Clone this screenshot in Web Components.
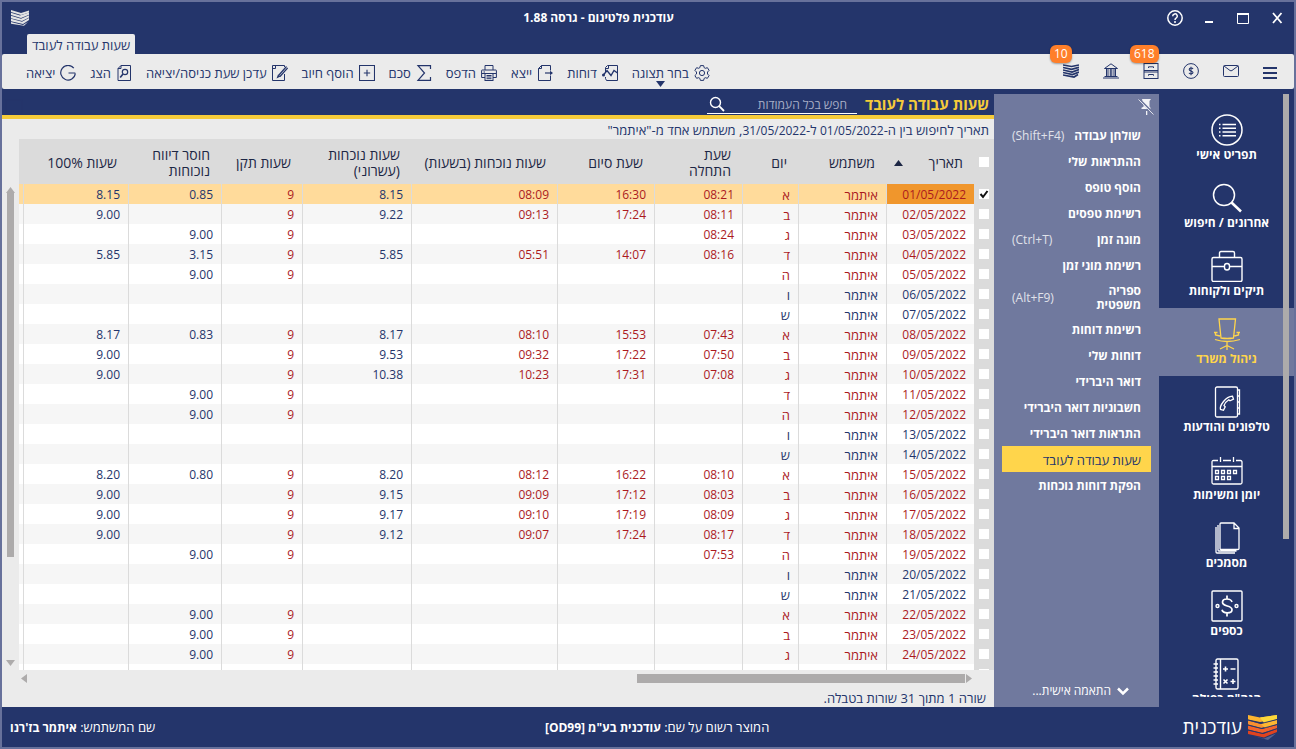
<!DOCTYPE html>
<html lang="he" dir="rtl">
<head>
<meta charset="utf-8">
<title>עודכנית פלטינום</title>
<style>
  html, body { margin: 0; height: 100%; }
  body {
    font: 12px/16px "Open Sans", "Noto Sans", "Liberation Sans", sans-serif;
    --navy: #24356b; --slate: #70799e; --light: #ebebeb; --head: #dbdbdb;
    --gold: #f5cb3a; --sel: #ffd54b; --bar: #adabab; --red: #ab1a1e;
    color: var(--navy);
  }
</style>
</head>
<body>
<od-app></od-app>
<script>
const ICONS = {
  logo: [20, 16, '<g fill="#e4e4e4"><path d="M1 0l10 3 8-2.600v2L11 5 1 2z"/><path d="M1 2.700l9 2.800 9-3v2.200L11 8 1 5z"/><path d="M1 5.700l10 3 8-3.500v2.200L12 11 1 8.200z"/><path d="M1 8.800l11 3 7-3.700v2L13 14 1 11.200z"/><path d="M1 12l12 3 5-3-4 3.700L1 13.800z"/></g>'],
  help: [16, 16, '<g fill="none" stroke="currentColor" stroke-width="1.500"><circle cx="8" cy="8" r="7.200"/><path d="M5.700 6.200a2.300 2.300 0 1 1 3.400 2c-.8.500-1.100.8-1.100 1.700"/></g><circle cx="8" cy="12" r="1" fill="currentColor"/>'],
  min: [16, 16, '<path d="M4 11h8v2H4z" fill="currentColor"/>'],
  max: [16, 16, '<path d="M2.500 3.500h11v10h-11z" fill="none" stroke="currentColor"/><path d="M2 3h12v2H2z" fill="currentColor"/>'],
  close: [16, 16, '<path d="M4 3l8.500 10M12.500 3L4 13" stroke="currentColor" stroke-width="1.800"/>'],
  menu: [16, 16, '<path d="M0 4h14v2H0zM0 9h14v2H0zM0 14h14v2H0z" fill="currentColor"/>'],
  mail: [16, 16, '<g fill="none" stroke="currentColor"><rect x=".5" y="2.500" width="15" height="11" rx="1"/><path d="M1 3l6 4.500q1 .7 2 0L15 3"/></g>'],
  coin: [16, 16, '<g fill="none" stroke="currentColor"><circle cx="8" cy="8" r="7.400"/><path d="M10 6c-.5-1.300-3.800-1.300-3.800.4C6.200 8.300 10 7.500 10 9.600c0 1.700-3.500 1.700-4 .2M8 3.700v8.600" stroke-width="1.100"/></g>'],
  cabinet: [16, 16, '<g fill="none" stroke="currentColor"><rect x="1" y=".5" width="14" height="15"/><path d="M1 7.500h14M1 9h14M5.500 5V3.800h5V5M5.500 12.700v-1.200h5v1.200"/></g>'],
  bank: [16, 16, '<g fill="none" stroke="currentColor"><path d="M1.500 5.500L8 .8l6.500 4.700zM3.500 6v7M5 6v7M7.300 6v7M8.800 6v7M11 6v7M12.500 6v7M1.500 13.500h13M0 15h16"/></g>'],
  stack: [16, 16, '<g fill="none" stroke="currentColor" stroke-width="1.700"><path d="M0 2l8.500 1.500L16 2M0 4.500l8.500 1.800 7.500-2M0 7l9 2 7-2.500M0 9.500l9.500 2L16 9M0 12l11 2 4-2.500"/></g>'],
  gear: [16, 16, '<g fill="none" stroke="currentColor" stroke-width="1"><circle cx="8" cy="8" r="2.600"/><path d="M6.400.6h3.200l.6 2.100 1.100.6 2.100-.6 1.700 2.700-1.600 1.600v2l1.600 1.600-1.700 2.700-2.100-.6-1.100.6-.6 2.100H6.400l-.6-2.100-1.100-.6-2.100.6-1.700-2.700L2.500 9V7L.9 5.400l1.700-2.700 2.100.6 1.100-.6z"/></g>'],
  report: [16, 16, '<g fill="none" stroke="currentColor"><path d="M3.500 7V2.500l2-2h10v15H4.500l-1-2V12M3.500 3.500h3v-3"/><path d="M1 10.500l4-5 4 5 3-5 3.500 2.500" stroke-width="1.400"/></g><circle cx="1.500" cy="10" r="1.500" fill="currentColor"/>'],
  export: [16, 16, '<g fill="none" stroke="currentColor"><path d="M13.500 5.500v-5h-9l-3 3v12h12v-5M1.500 3.500h3v-3"/><path d="M8 8h7" stroke-width="1.200"/></g><path d="M13 5.800L16 8l-3 2.200z" fill="currentColor"/>'],
  print: [16, 16, '<g fill="none" stroke="currentColor"><path d="M4 5V.5h8V5M4 12.500H.6V5.500q0-.5.500-.5h13.800q.5 0 .5.500v7H12"/><rect x="4" y="8.500" width="8" height="7"/><path d="M5.500 10.500h5M5.500 12h5M5.500 13.700h5M2.500 7h1.500M1 8.500h14"/></g>'],
  sigma: [16, 16, '<path d="M14.500 4V.7H2L8.500 8 2 15.300h12.500V12" fill="none" stroke="currentColor" stroke-width="1.200"/>'],
  plus: [16, 16, '<path d="M.5.500h15v15H.5zM8 4.800v6.400M4.800 8h6.400" fill="none" stroke="currentColor" stroke-width="1.100"/>'],
  edit: [16, 16, '<g fill="none" stroke="currentColor"><path d="M12.500 2V.5H.500v15h12V9M.5 3.500h3v-3"/><path d="M14.500 1.500L6.500 10.500M15.700 3L8 11.500" stroke-width="1.200"/></g><path d="M6 9.500l2.500 2-4 2z" fill="currentColor"/>'],
  view: [16, 16, '<g fill="none" stroke="currentColor"><path d="M2 3.500l3-3h9.500v15H2zM2 3.500h3v-3"/><circle cx="9" cy="7" r="2.700" stroke-width="1.200"/><path d="M7 9l-2.800 3.500" stroke-width="1.600"/></g>'],
  exit: [16, 16, '<path d="M13.800 3.200A7.300 7.300 0 1 0 15.300 8.500M15.300 8H8.500" fill="none" stroke="currentColor" stroke-width="1.200"/>'],
  monitor: [18, 16, '<rect x="1" y="1" width="16" height="12.500" rx="1" fill="none" stroke="currentColor" stroke-width="1.500"/><path d="M6 14h6v2H6z" fill="currentColor"/>'],
  find: [16, 16, '<g fill="none" stroke="currentColor"><circle cx="6.500" cy="6.500" r="5" stroke-width="1.400"/><path d="M10.200 10.200L15 15" stroke-width="1.800"/></g>'],
  pin: [16, 16, '<g fill="#f3f3f6"><path d="M4 0h9l-1.500 2v5.500L13 9.500h-1L4.500 2z"/><path d="M5.500 6l4 4H3.500V8.800l2-1zM8 12h1.300v4H8z"/></g><path d="M.5.500l15 15" stroke="#dfe1ea" stroke-width="1"/>'],
  chevron: [14, 14, '<path d="M2 4.500l5 5 5-5" fill="none" stroke="currentColor" stroke-width="2.500"/>'],
  list: [32, 32, '<g fill="none" stroke="currentColor" stroke-width="1.500"><circle cx="16" cy="16" r="15"/><path d="M11.500 10.500H25M11.500 14.200H25M11.500 18H25M11.500 21.700H25" /><path d="M8 10.500h1.500M8 14.200h1.500M8 18h1.500M8 21.700h1.500"/></g>'],
  search: [32, 32, '<g fill="none" stroke="currentColor"><circle cx="13" cy="13" r="10.500" stroke-width="1.500"/><path d="M20.500 20.500L30 29.500" stroke-width="2.600"/></g>'],
  brief: [32, 32, '<g fill="none" stroke="currentColor" stroke-width="1.400"><rect x="1" y="7.500" width="30" height="24" rx="1.500"/><path d="M8.500 7V3q0-1.500 1.500-1.500h12q1.500 0 1.500 1.500v4M1 16.500h12.500M18.500 16.500H31"/><rect x="13.500" y="13.500" width="5" height="6.500" rx="2.500"/></g>'],
  chair: [32, 32, '<g fill="none" stroke="currentColor" stroke-width="1.300"><path d="M8 1h16.500l-2 19q-6.500 1-12.500 0zM3 14.500h3.500M4.500 14.500v2.500l4.500 1M29 14.500h-3.500M27.500 14.500v2.500L23.500 18M4 21.500q12 4 25 0M16 24v8M16 27.500l-7 3.500M16 27.500l7 3.500"/></g>'],
  phone: [32, 32, '<g fill="none" stroke="currentColor" stroke-width="1.300"><rect x="4.500" y="1" width="22" height="30" rx="1.500"/><path d="M26.500 4h2v6h-2M26.500 10h2v6h-2M26.500 16h2v6h-2M26.500 22h2v6h-2"/><path d="M9.500 23.500q-1-3 3-8t9-5.300l1 3-3.500 1.600-1.200-1q-3.500 2.200-4.800 5.700l1.200 1.300-1.700 3.500z"/></g>'],
  cal: [32, 32, '<g fill="none" stroke="currentColor" stroke-width="1.300"><path d="M7 6.500H2.500Q1 6.500 1 8v20.500q0 1.500 1.500 1.500h27q1.500 0 1.500-1.500V8q0-1.500-1.500-1.500H25M12 6.500h8M1 12.500h30M9.500 3v5M22.500 3v5"/><path d="M4.500 16.500h3v3h-3zM10.500 16.500h3v3h-3zM16.500 16.500h3v3h-3zM22.500 16.500h3v3h-3zM4.500 22.500h3v3h-3zM10.500 22.500h3v3h-3zM16.500 22.500h3v3h-3z"/></g>'],
  docs: [32, 32, '<g fill="none" stroke="currentColor" stroke-width="1.300"><path d="M10 1h13l5 5v20.500q0 1-1 1H10q-1 0-1-1V2q0-1 1-1zM23 1v5.500h5M7 3v25q0 1 1 1h17.500M5 5v25q0 1 1 1h18"/></g>'],
  money: [32, 32, '<g fill="none" stroke="currentColor" stroke-width="1.400"><rect x="1" y="1" width="30" height="30" rx="1"/><path d="M21 12q-1-3-5-3-4.500 0-4.500 3.300c0 4.700 9.500 2.700 9.500 7.400 0 4-9 4.300-10 0M16 5.500V9M16 23v3.500" stroke-width="1.700"/><circle cx="6.500" cy="16" r="1.500"/><circle cx="25.500" cy="16" r="1.500"/></g>'],
  ledger: [32, 32, '<g fill="none" stroke="currentColor" stroke-width="1.400"><rect x="5" y="1" width="22" height="30" rx="1.500"/><path d="M9.500 1v30M2.500 6h4.500M2.500 10h4.500M2.500 14h4.500M2.500 18h4.500M2.500 22h4.500M2.500 26h4.500"/><path d="M12 11h5M14.500 8.500v5M19.500 11h5M12.500 21.500l4 4M16.500 21.500l-4 4M19.500 23.500h5M22 21v5" stroke-width="1.600"/></g>'],
  brand: [30, 26, '<path d="M1 1l12 2.500L30 1v4l-17 3L1 5.500z" fill="#fdb52f"/><path d="M13 3.500L30 1v4l-13 4z" fill="#fcd83a"/><path d="M1 6.500l13 3.500 16-4v4l-16 4L1 10.500z" fill="#f99030"/><path d="M14 10l16-4v4l-12 4z" fill="#fdb733"/><path d="M1 11.500l14 3.500 15-4v3.500L15 19 1 15.500z" fill="#f2642b"/><path d="M1 16.500l15 3.500 14-5v3l-13 5.500L1 20z" fill="#e0431f"/><path d="M5 21.500l12 3 12-5-8 6.500z" fill="#57628e"/><path d="M1 6l13 3.500L30 5.500M1 11l14 3.500 15-4M1 16l15 3.500 14-5" fill="none" stroke="#24356b" stroke-width=".8"/>'],
  up: [9, 6, '<path d="M0 6L4.500 0 9 6z" fill="currentColor"/>'],
  down: [9, 6, '<path d="M0 0h9L4.500 6z" fill="currentColor"/>'],
  left: [6, 9, '<path d="M6 0v9L0 4.500z" fill="currentColor"/>'],
  right: [6, 9, '<path d="M0 0v9l6-4.500z" fill="currentColor"/>']
};

function define(name, render) {
  customElements.define(name, class extends HTMLElement {
    constructor() {
      super();
      this.attachShadow({ mode: 'open' });
    }
    connectedCallback() {
      const t = document.createElement('template');
      t.innerHTML = '<style>*{box-sizing:border-box}button,input{font:inherit;color:inherit;border:0;background:none;padding:0;margin:0}a{color:inherit;text-decoration:none}</style>' + render(this);
      this.shadowRoot.replaceChildren(t.content.cloneNode(true));
    }
  });
}

define('od-icon', el => {
  const [w, h, body] = ICONS[el.getAttribute('name')];
  return `<style>:host{display:block;flex:none;width:${w}px;height:${h}px}svg{display:block}</style>
  <svg width="${w}" height="${h}" viewBox="0 0 ${w} ${h}" aria-hidden="true">${body}</svg>`;
});

define('od-titlebar', () => `
<style>
  :host{display:block;background:var(--navy);color:#fff}
  .top{display:flex;align-items:center;height:32px;padding:0 9px 0 8px}
  h1{flex:1;margin:0;text-align:center;font-size:12px;font-weight:700}
  .win{display:flex;gap:18px}
  button{display:block}
  .tabs{display:flex;justify-content:flex-end;padding-left:25px}
  .tab{height:20px;padding:0 5px;font-size:13px;line-height:22px;background:var(--light);color:var(--navy);border-radius:2px 2px 0 0}
</style>
<div class="top">
  <div class="win">
    <button aria-label="סגור"><od-icon name="close"></od-icon></button>
    <button aria-label="הגדל"><od-icon name="max"></od-icon></button>
    <button aria-label="מזער"><od-icon name="min"></od-icon></button>
    <button aria-label="עזרה"><od-icon name="help"></od-icon></button>
  </div>
  <h1>עודכנית פלטינום - גרסה 1.88</h1>
  <od-icon name="logo"></od-icon>
</div>
<div class="tabs"><button class="tab">שעות עבודה לעובד</button></div>`);

define('od-tool', el => `
<style>
  :host{display:block;position:relative;font-size:13px}
  button{display:flex;align-items:center;gap:5px;height:16px;white-space:nowrap}
  .arrow{position:absolute;top:16px;left:24px}
</style>
<button><od-icon name="${el.getAttribute('icon')}"></od-icon><slot></slot></button>
${el.hasAttribute('menu') ? '<od-icon class="arrow" name="down"></od-icon>' : ''}`);

define('od-quick', el => `
<style>
  :host{display:block;position:relative}
  button{display:block}
  span{position:absolute;bottom:16px;left:-13px;height:18px;padding:0 4px;border-radius:6px;background:#ff7f2a;color:#fff;line-height:18px;box-shadow:0 1px 2px #0005}
</style>
<button aria-label="${el.getAttribute('label')}"><od-icon name="${el.getAttribute('icon')}"></od-icon></button>
${el.hasAttribute('badge') ? `<span>${el.getAttribute('badge')}</span>` : ''}`);

define('od-toolbar', () => `
<style>
  :host{display:flex;justify-content:space-between;align-items:center;height:35px;padding:2px 15px 0 24px;background:var(--light);border-radius:2px}
  .quick{display:flex;gap:24px;padding-bottom:3px}
  .tools{display:flex;gap:14px}
</style>
<div class="quick">
  <od-quick icon="menu" label="תפריט"></od-quick>
  <od-quick icon="mail" label="דואר"></od-quick>
  <od-quick icon="coin" label="כספים"></od-quick>
  <od-quick icon="cabinet" label="תיקים" badge="618"></od-quick>
  <od-quick icon="bank" label="בנק"></od-quick>
  <od-quick icon="stack" label="התראות" badge="10"></od-quick>
</div>
<div class="tools">
  <od-tool icon="gear" menu>בחר תצוגה</od-tool>
  <od-tool icon="report">דוחות</od-tool>
  <od-tool icon="export">ייצא</od-tool>
  <od-tool icon="print">הדפס</od-tool>
  <od-tool icon="sigma">סכם</od-tool>
  <od-tool icon="plus">הוסף חיוב</od-tool>
  <od-tool icon="edit">עדכן שעת כניסה/יציאה</od-tool>
  <od-tool icon="view">הצג</od-tool>
  <od-tool icon="exit">יציאה</od-tool>
</div>`);

define('od-nav-item', el => `
<style>
  :host{display:block}
  a{display:flex;flex-direction:column;align-items:center;height:68px;padding-top:10px;color:#fff;font-weight:700;line-height:18px}
  :host([active]) a{background:var(--slate);color:var(--sel)}
</style>
<a href="#"><od-icon name="${el.getAttribute('icon')}"></od-icon><slot></slot></a>`);

define('od-nav', () => `
<style>
  :host{display:block;position:relative;width:135px;min-height:0;padding:5px 0 10px;background:var(--navy)}
  nav{height:100%;padding-top:10px;overflow:hidden}
  .thumb{position:absolute;top:5px;right:5px;width:6px;height:72%;background:var(--bar)}
</style>
<nav>
  <od-nav-item icon="list">תפריט אישי</od-nav-item>
  <od-nav-item icon="search">אחרונים / חיפוש</od-nav-item>
  <od-nav-item icon="brief">תיקים ולקוחות</od-nav-item>
  <od-nav-item icon="chair" active>ניהול משרד</od-nav-item>
  <od-nav-item icon="phone">טלפונים והודעות</od-nav-item>
  <od-nav-item icon="cal">יומן ומשימות</od-nav-item>
  <od-nav-item icon="docs">מסמכים</od-nav-item>
  <od-nav-item icon="money">כספים</od-nav-item>
  <od-nav-item icon="ledger">הנה"ח כפולה</od-nav-item>
</nav>
<div class="thumb"></div>`);

define('od-menu-item', el => `
<style>
  :host{display:block}
  a{display:flex;justify-content:space-between;align-items:center;min-height:26px;padding:6px 10px 4px;color:#fff;font-weight:700;line-height:14px}
  .key{font-weight:400;color:#e0e2ea}
  :host([active]) a{background:var(--sel);color:var(--navy);font-size:13px;font-weight:500}
</style>
<a href="#"><span><slot></slot></span>${el.hasAttribute('key') ? `<span class="key" dir="ltr">${el.getAttribute('key')}</span>` : ''}</a>`);

define('od-menu', () => `
<style>
  :host{display:flex;flex-direction:column;width:165px;margin-top:5px;padding:0 8px;background:var(--slate);color:#fff}
  .pin{width:16px;height:28px;margin-right:-3px;padding-bottom:2px}
  .more{display:flex;align-items:center;gap:5px;margin:auto 21px 8px 0;height:16px}
</style>
<button class="pin" aria-label="נעץ"><od-icon name="pin"></od-icon></button>
<od-menu-item key="(Shift+F4)">שולחן עבודה</od-menu-item>
<od-menu-item>ההתראות שלי</od-menu-item>
<od-menu-item>הוסף טופס</od-menu-item>
<od-menu-item>רשימת טפסים</od-menu-item>
<od-menu-item key="(Ctrl+T)">מונה זמן</od-menu-item>
<od-menu-item>רשימת מוני זמן</od-menu-item>
<od-menu-item key="(Alt+F9)">ספריה<br>משפטית</od-menu-item>
<od-menu-item>רשימת דוחות</od-menu-item>
<od-menu-item>דוחות שלי</od-menu-item>
<od-menu-item>דואר היברידי</od-menu-item>
<od-menu-item>חשבוניות דואר היברידי</od-menu-item>
<od-menu-item>התראות דואר היברידי</od-menu-item>
<od-menu-item active>שעות עבודה לעובד</od-menu-item>
<od-menu-item>הפקת דוחות נוכחות</od-menu-item>
<button class="more"><od-icon name="chevron"></od-icon>התאמה אישית...</button>`);

const HOURS = {
  1: ['08:21', '16:30', '08:09', '8.15', '9', '0.85', '8.15'],
  2: ['08:11', '17:24', '09:13', '9.22', '9', '', '9.00'],
  3: ['08:24', '', '', '', '9', '9.00', ''],
  4: ['08:16', '14:07', '05:51', '5.85', '9', '3.15', '5.85'],
  8: ['07:43', '15:53', '08:10', '8.17', '9', '0.83', '8.17'],
  9: ['07:50', '17:22', '09:32', '9.53', '9', '', '9.00'],
  10: ['07:08', '17:31', '10:23', '10.38', '9', '', '9.00'],
  15: ['08:10', '16:22', '08:12', '8.20', '9', '0.80', '8.20'],
  16: ['08:03', '17:12', '09:09', '9.15', '9', '', '9.00'],
  17: ['08:09', '17:19', '09:10', '9.17', '9', '', '9.00'],
  18: ['08:17', '17:24', '09:07', '9.12', '9', '', '9.00'],
  19: ['07:53', '', '', '', '9', '9.00', '']
};
const DAYS = 'אבגדהוש';

function hoursRow(d) {
  const weekday = (d - 1) % 7;
  const off = weekday > 4;
  const vals = off ? Array(7).fill('') : HOURS[d] || ['', '', '', '', '9', '9.00', ''];
  const date = String(d).padStart(2, '0') + '/05/2022';
  const cells = [date, 'איתמר', DAYS[weekday], ...vals];
  return `<tr class="${off ? 'off' : ''}${d === 1 ? ' sel' : ''}"><td class="chk"><input type="checkbox" aria-label="${date}"${d === 1 ? ' checked' : ''}></td>${cells.map(c => `<td>${c}</td>`).join('')}<td></td></tr>`;
}

define('od-hours-table', () => `
<style>
  :host{display:block;min-height:0;overflow:hidden;background:#fff}
  table{width:100%;table-layout:fixed;border-collapse:separate;border-spacing:0}
  th{height:45px;padding:2px 11px 0 4px;background:var(--head);color:#1d2745;text-align:right;font-size:14px;line-height:16px;font-weight:500}
  td{height:20px;padding:2px 8px 0 4px;line-height:18px;text-align:right;color:var(--red);white-space:nowrap;border-left:1px solid var(--head);overflow:hidden}
  td:nth-child(3),td:nth-child(4){font-size:13px}
  td:nth-child(8),td:nth-child(10),td:nth-child(11),.off td{color:var(--navy)}
  tr:nth-child(even) td{background:#f6f6f6}
  tr.sel td{background:#ffdb9b}
  tr.sel td:nth-child(2){background:#f0962c}
  tr td.chk,tr.sel td.chk{background:var(--head);border:0}
  .chk{padding:0 5px;line-height:0}
  td:last-child{border:0;padding:0}
  input{appearance:none;display:block;width:10px;height:10px;background:#fff}
  input:checked{background:#fff url('data:image/svg+xml,<svg xmlns="http://www.w3.org/2000/svg" viewBox="0 0 10 10"><path d="M1.500 5l2.500 3 4.500-6" fill="none" stroke="%23111" stroke-width="2"/></svg>')}
  .sort{display:flex;align-items:center;justify-content:space-between;padding-left:4px}
</style>
<table>
  <colgroup><col style="width:20px"><col style="width:88px"><col style="width:88px"><col style="width:56px"><col style="width:88px"><col style="width:97px"><col style="width:146px"><col style="width:109px"><col style="width:81px"><col style="width:93px"><col style="width:105px"><col></colgroup>
  <thead><tr>
    <th class="chk"><input type="checkbox" aria-label="בחר הכל"></th>
    <th><div class="sort">תאריך<od-icon name="up"></od-icon></div></th><th>משתמש</th><th>יום</th><th>שעת<br>התחלה</th><th>שעת סיום</th><th>שעות נוכחות (בשעות)</th><th>שעות נוכחות<br>(עשרוני)</th><th>שעות תקן</th><th>חוסר דיווח<br>נוכוחות</th><th>שעות 100%</th><th></th>
  </tr></thead>
  <tbody>${Array.from({ length: 24 }, (_, i) => hoursRow(i + 1)).join('')}<tr><td class="chk"><input type="checkbox" aria-label="שורה נוספת"></td>${'<td></td>'.repeat(11)}</tr></tbody>
</table>`);

define('od-content', () => `
<style>
  :host{display:flex;flex-direction:column;min-width:0;min-height:0;background:var(--light)}
  header{display:flex;align-items:flex-end;height:30px;padding:0 5px 0 3px;background:var(--navy);border-bottom:4px solid var(--gold)}
  h2{margin:0 0 0 8px;font-size:15px;line-height:22px;font-weight:700;color:var(--gold);white-space:nowrap}
  .search{display:flex;align-items:center;width:150px;height:19px;margin:0 0 1px auto;padding:0 10px 0 2px;border-bottom:1px solid #fff;color:#fff}
  .search input{flex:1;width:0;padding-top:2px;outline:0}
  .search input::placeholder{color:#a7aec6;opacity:1}
  .info{height:20px;padding:0 5px;font-size:13px;line-height:22px}
  time{font-size:12px}
  .grid{flex:1;display:grid;grid-template-columns:minmax(0,1fr) 17px;min-height:0}
  .vs{display:flex;flex-direction:column;align-items:center;padding:48px 0 4px;color:var(--bar)}
  .vs div{flex:1;width:100%;padding:0 5px}
  .vs i{display:block;height:78%;background:var(--bar)}
  .hs{display:flex;align-items:center;height:17px;padding:0 22px 0 19px;color:var(--bar)}
  .hs div{flex:1;margin-right:1px}
  .hs i{display:block;width:35%;height:9px;background:var(--bar)}
  .status{height:20px;padding:0 8px;font-size:13px;line-height:22px}
</style>
<header>
  <h2>שעות עבודה לעובד</h2>
  <div class="search"><input type="text" aria-label="חיפוש" placeholder="חפש בכל העמודות"><od-icon name="find"></od-icon></div>
  <od-icon name="monitor"></od-icon>
</header>
<div class="info">תאריך לחיפוש בין ה-<time>01/05/2022</time> ל-<time>31/05/2022</time>, משתמש אחד מ-"איתמר"</div>
<div class="grid">
  <od-hours-table></od-hours-table>
  <div class="vs"><od-icon name="up"></od-icon><div><i></i></div><od-icon name="down"></od-icon></div>
</div>
<div class="hs"><od-icon name="right"></od-icon><div><i></i></div><od-icon name="left"></od-icon></div>
<div class="status">שורה 1 מתוך 31 שורות בטבלה.</div>`);

define('od-footer', () => `
<style>
  :host{display:flex;align-items:center;height:40px;padding-left:8px;background:var(--navy);color:#fff;font-size:13px}
  .brand{display:flex;align-items:center;gap:5px;width:135px;padding-right:17px;font-size:19px;line-height:24px}
  .owner{flex:1;text-align:center}
  b{font-size:12px;font-weight:700}
</style>
<div class="brand"><od-icon name="brand"></od-icon>עודכנית</div>
<div class="owner">המוצר רשום על שם: <b>עודכנית בע"מ [OD99]</b></div>
<div>שם המשתמש: <b>איתמר בז'רנו</b></div>`);

define('od-app', () => `
<style>
  :host{display:flex;flex-direction:column;height:100vh;box-sizing:border-box;border:2px solid #67719b;background:var(--navy);overflow:hidden}
  main{flex:1;display:flex;min-height:0}
  od-content{flex:1}
</style>
<od-titlebar></od-titlebar>
<od-toolbar></od-toolbar>
<main><od-nav></od-nav><od-menu></od-menu><od-content></od-content></main>
<od-footer></od-footer>`);
</script>
</body>
</html>
